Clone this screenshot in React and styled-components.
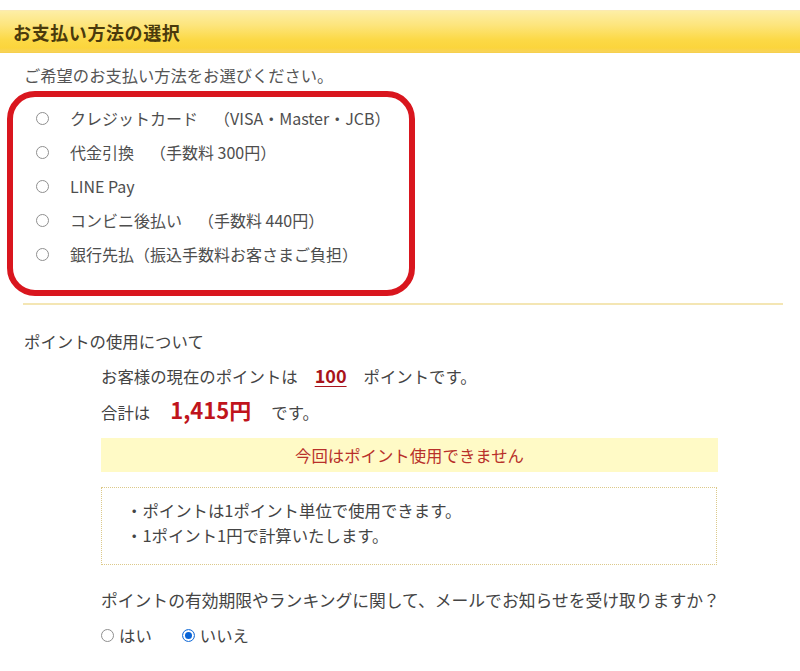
import React from 'react';
import styled, { createGlobalStyle } from 'styled-components';

const GlobalStyle = createGlobalStyle`
  body {
    margin: 0;
    background: #ffffff;
    font-family: "Noto Sans CJK JP", "Noto Sans", sans-serif;
    color: #444444;
  }
`;

const Page = styled.div`
  width: 800px;
  height: 671px;
  overflow: hidden;
  padding-top: 10px;
  box-sizing: border-box;
`;

const HeaderBar = styled.div`
  height: 43px;
  display: flex;
  align-items: center;
  padding-left: 13px;
  box-sizing: border-box;
  background: linear-gradient(#fdeea6 0%, #fde57c 35%, #fcd946 70%, #fbd53c 90%, #f8d35a 100%);
  border-top: 1px solid #fbeab0;
  border-bottom: 1px solid #f6d04e;
  font-size: 18px;
  font-weight: 700;
  color: #4a3a0c;
  letter-spacing: 0.6px;
`;

const Lead = styled.div`
  margin-top: 10px;
  padding-left: 24px;
  font-size: 16.3px;
  line-height: 24px;
  color: #555555;
`;

const HighlightBox = styled.div`
  margin: 4px 0 0 7px;
  width: 408px;
  height: 205px;
  box-sizing: border-box;
  border: 6px solid #d9161e;
  border-radius: 28px;
  padding: 4px 0 0 23px;
`;

const OptionRow = styled.label`
  height: 34px;
  display: flex;
  align-items: center;
  font-size: 16px;
  color: #4e4e4e;
`;

const Radio = styled.span`
  flex: none;
  width: 13px;
  height: 13px;
  box-sizing: border-box;
  border-radius: 50%;
  background: #ffffff;
  border: 1px solid ${(p) => (p.checked ? '#1a6fd8' : '#8f8f8f')};
  box-shadow: ${(p) => (p.checked ? 'inset 0 0 0 2px #ffffff, inset 0 0 0 6px #0a64d6' : 'none')};
  margin-right: ${(p) => p.gap}px;
`;

const Note = styled.span`
  margin-left: ${(p) => p.space || 0}px;
`;

const Divider = styled.div`
  margin: 7px 17px 0 23px;
  height: 2px;
  background: #f4e6b4;
`;

const SectionTitle = styled.div`
  margin-top: 24px;
  padding-left: 24px;
  font-size: 16.4px;
  line-height: 24px;
  color: #444444;
`;

const PointArea = styled.div`
  margin-top: 9px;
  padding-left: 101px;
`;

const InfoLine = styled.div`
  display: flex;
  align-items: baseline;
  height: 31px;
  font-size: 16.4px;
  color: #444444;
`;

const PointValue = styled.span`
  margin: 0 17px;
  color: #a8141c;
  font-weight: 700;
  font-size: 18px;
  text-decoration: underline;
  text-underline-offset: 3px;
`;

const TotalValue = styled.span`
  margin: 0 20px;
  color: #c0141c;
  font-weight: 700;
  font-size: 22px;
`;

const Notice = styled.div`
  margin-top: 14px;
  width: 617px;
  height: 34px;
  display: flex;
  align-items: center;
  justify-content: center;
  background: #fffac6;
  color: #b8302a;
  font-size: 16.4px;
`;

const RuleBox = styled.div`
  margin-top: 15px;
  width: 616px;
  height: 78px;
  box-sizing: border-box;
  border: 1px dotted #dcc98a;
  padding: 10px 0 0 24px;
`;

const RuleItem = styled.div`
  font-size: 16.4px;
  line-height: 25px;
  color: #444444;
`;

const Question = styled.div`
  margin-top: 23px;
  font-size: 16.8px;
  line-height: 24px;
  color: #444444;
  white-space: nowrap;
`;

const ChoiceRow = styled.div`
  margin-top: 11px;
  display: flex;
  align-items: center;
  gap: 30px;
`;

const Choice = styled.label`
  display: flex;
  align-items: center;
  font-size: 16.4px;
  color: #444444;
`;

const methods = [
  { label: 'クレジットカード', note: '（VISA・Master・JCB）', space: 16 },
  { label: '代金引換', note: '（手数料 300円）', space: 16 },
  { label: 'LINE Pay' },
  { label: 'コンビニ後払い', note: '（手数料 440円）', space: 16 },
  { label: '銀行先払', note: '（振込手数料お客さまご負担）', space: 0 },
];

export default function App() {
  return (
    <Page>
      <GlobalStyle />
      <HeaderBar>お支払い方法の選択</HeaderBar>
      <Lead>ご希望のお支払い方法をお選びください。</Lead>
      <HighlightBox>
        {methods.map((m) => (
          <OptionRow key={m.label}>
            <Radio gap={21} />
            {m.label}
            {m.note && <Note space={m.space}>{m.note}</Note>}
          </OptionRow>
        ))}
      </HighlightBox>
      <Divider />
      <SectionTitle>ポイントの使用について</SectionTitle>
      <PointArea>
        <InfoLine>
          お客様の現在のポイントは<PointValue>100</PointValue>ポイントです。
        </InfoLine>
        <InfoLine>
          合計は<TotalValue>1,415円</TotalValue>です。
        </InfoLine>
        <Notice>今回はポイント使用できません</Notice>
        <RuleBox>
          <RuleItem>・ポイントは1ポイント単位で使用できます。</RuleItem>
          <RuleItem>・1ポイント1円で計算いたします。</RuleItem>
        </RuleBox>
        <Question>ポイントの有効期限やランキングに関して、メールでお知らせを受け取りますか？</Question>
        <ChoiceRow>
          <Choice>
            <Radio gap={5} />
            はい
          </Choice>
          <Choice>
            <Radio gap={5} checked />
            いいえ
          </Choice>
        </ChoiceRow>
      </PointArea>
    </Page>
  );
}
